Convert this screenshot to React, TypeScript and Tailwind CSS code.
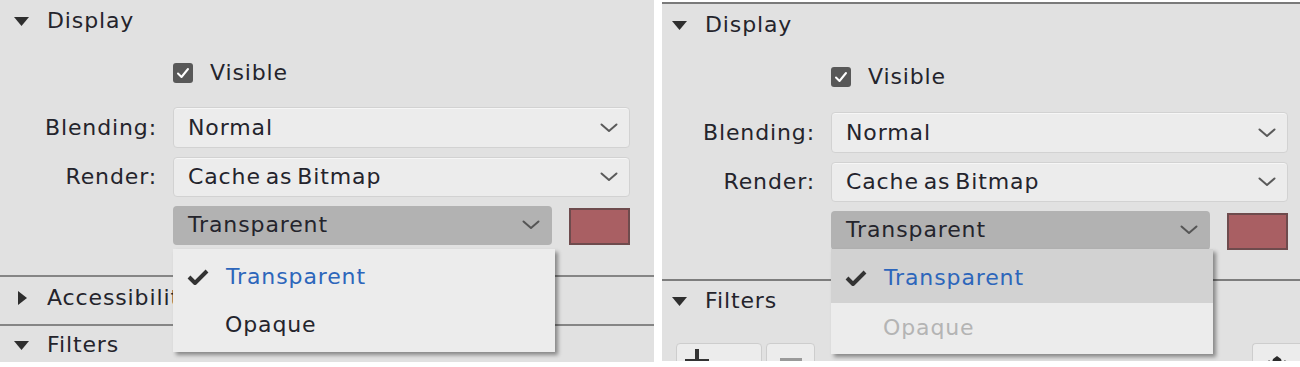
import { FC } from 'react';

const Chevron: FC<{ className?: string }> = ({ className = '' }) => (
  <svg width="18" height="10" viewBox="0 0 18 10" className={className}>
    <path d="M1.5 1.5 L9 8 L16.5 1.5" fill="none" stroke="currentColor" strokeWidth="2" strokeLinecap="round" strokeLinejoin="round" />
  </svg>
);

const TriDown = () => (
  <svg width="15" height="9" viewBox="0 0 15 9" className="shrink-0">
    <path d="M0 0 H15 L7.5 9 Z" fill="#2e2e2e" />
  </svg>
);

const TriRight = () => (
  <svg width="9" height="14" viewBox="0 0 9 14" className="shrink-0">
    <path d="M0 0 L9 7 L0 14 Z" fill="#2e2e2e" />
  </svg>
);

const Select: FC<{ value: string; active?: boolean; className?: string }> = ({ value, active, className = '' }) => (
  <div
    className={
      active
        ? `flex items-center justify-between rounded-[4px] bg-[#b2b2b2] pl-[15px] pr-[12px] text-[#24242c] ${className}`
        : `flex items-center justify-between rounded-[4px] border border-[#d2d2d2] bg-[#ececec] pl-[14px] pr-[11px] text-[#24242c] shadow-[inset_0_1px_0_#f6f6f6] ${className}`
    }
  >
    <span>{value}</span>
    <Chevron className={active ? 'text-[#555]' : 'text-[#5a5a5a]'} />
  </div>
);

const Checkbox = () => (
  <div className="flex h-[20px] w-[20px] items-center justify-center rounded-[3px] bg-[#585858]">
    <svg width="14" height="12" viewBox="0 0 14 12">
      <path d="M2 6.5 L5.5 10 L12 2" fill="none" stroke="#fff" strokeWidth="2" strokeLinecap="round" strokeLinejoin="round" />
    </svg>
  </div>
);

const CheckMark = () => (
  <svg width="22" height="16" viewBox="0 0 22 16" className="shrink-0">
    <path d="M2 8 L8 14 L20 2" fill="none" stroke="#333" strokeWidth="4" strokeLinejoin="round" />
  </svg>
);

const Panel: FC<{ alt?: boolean }> = ({ alt }) => {
  return (
    <div
      className={
        alt
          ? 'relative mt-[2px] h-[359px] flex-1 overflow-hidden border-t-2 border-[#7a7a7a] bg-[#e1e1e1]'
          : 'relative h-[362px] w-[654px] shrink-0 overflow-hidden bg-[#e1e1e1]'
      }
    >
      {/* Display header */}
      <div className={alt ? 'flex h-[42px] items-center gap-[18px] pl-[10px]' : 'flex h-[42px] items-center gap-[18px] pl-[14px]'}>
        <TriDown />
        <span className="text-[#24242c]">Display</span>
      </div>

      {/* Visible */}
      <div className={alt ? 'mt-[21px] flex h-[20px] items-center gap-[17px] pl-[169px]' : 'mt-[21px] flex h-[20px] items-center gap-[17px] pl-[173px]'}>
        <Checkbox />
        <span className="text-[#24242c]">Visible</span>
      </div>

      {/* Form rows */}
      <div
        className={
          alt
            ? 'mt-[25px] grid grid-cols-[153px_1fr] items-center gap-x-[16px] pr-[13px]'
            : 'mt-[24px] grid grid-cols-[157px_1fr] items-center gap-x-[16px] pr-[26px]'
        }
      >
        <span className="text-right text-[#24242c]">Blending:</span>
        <Select value="Normal" className="h-[41px]" />
        <span className="mt-[9px] text-right text-[#24242c]">Render:</span>
        <Select value="Cache as Bitmap" className="mt-[9px] h-[40px]" />
        <span />
        <div className="mt-[8px] flex items-center">
          <Select value="Transparent" active className="h-[39px] w-[379px]" />
          <div className="ml-[17px] mt-[3px] h-[37px] w-[61px] border-2 border-[#6e4b4d] bg-[#a95f63]" />
        </div>
      </div>

      {alt ? (
        <>
          <div className="mt-[29px] border-t-2 border-[#7d7d7d]" />
          <div className="flex h-[40px] items-center gap-[18px] pl-[10px]">
            <TriDown />
            <span className="text-[#24242c]">Filters</span>
          </div>
          {/* toolbar */}
          <div className="mt-[22px] flex items-start pl-[14px] pr-0">
            <div className="flex h-[30px] w-[86px] items-start gap-[20px] rounded-t-[4px] border border-[#cdcdcd] bg-[#ececec] pl-[8px] pt-[5px]">
              <svg width="24" height="24" viewBox="0 0 24 24">
                <path d="M10 0 H14 V10 H24 V14 H14 V24 H10 V14 H0 V10 H10 Z" fill="#333" />
              </svg>
              <span className="mt-[12px] flex gap-[10px]">
                <span className="h-[4px] w-[4px] rounded-full bg-[#333]" />
                <span className="h-[4px] w-[4px] rounded-full bg-[#333]" />
              </span>
            </div>
            <div className="ml-[4px] flex h-[30px] w-[49px] justify-center rounded-t-[4px] border border-[#cdcdcd] bg-[#ececec] pt-[14px]">
              <span className="h-[3px] w-[22px] bg-[#9a9a9a]" />
            </div>
            <div className="ml-auto flex h-[30px] w-[48px] justify-center rounded-tl-[4px] border border-r-0 border-[#cdcdcd] bg-[#ececec] pt-[8px]">
              <svg width="30" height="14" viewBox="0 0 30 14">
                <path d="M9 14 L11 7 L15 4 L19 7 L21 14 Z M3 14 L7 8 L12 14 Z M18 14 L23 8 L27 14 Z" fill="#2a2a2a" />
              </svg>
            </div>
          </div>
        </>
      ) : (
        <>
          <div className="mt-[30px] border-t-2 border-[#858585]" />
          <div className="flex h-[47px] items-center gap-[18px] pb-[6px] pl-[18px]">
            <TriRight />
            <span className="ml-[2px] text-[#24242c]">Accessibility</span>
          </div>
          <div className="border-t-2 border-[#858585]" />
          <div className="flex h-[38px] items-center gap-[18px] pl-[14px]">
            <TriDown />
            <span className="text-[#24242c]">Filters</span>
          </div>
        </>
      )}

      {/* open dropdown menu */}
      <div
        className={
          alt
            ? 'absolute left-[169px] top-[245px] flex h-[105px] w-[382px] flex-col bg-[#ececec] shadow-[3px_3px_4px_rgba(0,0,0,0.4)]'
            : 'absolute left-[173px] top-[249px] flex h-[103px] w-[382px] flex-col bg-[#ececec] pt-[4px] shadow-[3px_3px_4px_rgba(0,0,0,0.4)]'
        }
      >
        <div
          className={
            alt
              ? 'flex h-[54px] items-center gap-[17px] bg-[#d2d2d2] pl-[14px] pt-[4px]'
              : 'flex h-[48px] items-center gap-[17px] pl-[14px]'
          }
        >
          <CheckMark />
          <span className="text-[#2d66bb]">Transparent</span>
        </div>
        <div className={alt ? 'flex h-[51px] items-center pl-[52px] pb-[2px]' : 'flex h-[48px] items-center pl-[52px]'}>
          <span className={alt ? 'text-[#b4b4b4]' : 'text-[#24242c]'}>Opaque</span>
        </div>
      </div>
    </div>
  );
};

const App = () => {
  return (
    <div className="flex h-[367px] w-[1300px] items-start gap-[8px] bg-white font-['DejaVu_Sans',sans-serif] text-[22px] leading-none tracking-[0.04em] [word-spacing:-3px]">
      <Panel />
      <Panel alt />
    </div>
  );
};

export default App;
